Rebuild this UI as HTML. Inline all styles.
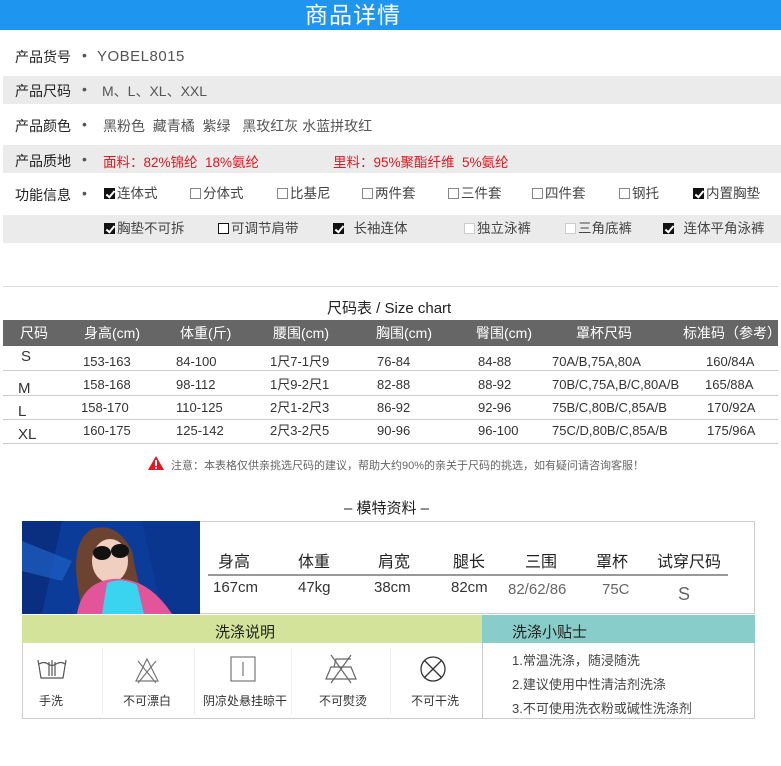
<!DOCTYPE html>
<html><head><meta charset="utf-8"><style>
*{margin:0;padding:0;box-sizing:border-box}
body{width:781px;height:766px;background:#fff;position:relative;overflow:hidden;font-family:"Liberation Sans","Noto Sans CJK SC",sans-serif;color:#333}
.a{position:absolute;white-space:nowrap}
.band{position:absolute;left:3px;right:0;background:#ebebeb}
.lbl{font-size:14px;color:#222;left:15px}
.dot{font-size:14px;color:#555;left:82px}
.v{font-size:14px;color:#555}
.cb{display:inline-block;width:11px;height:11px;border:1px solid #888;vertical-align:-1px;margin-right:2px;background:#fff;position:relative}
.ck{background:#111;border-color:#111}
.ck:after{content:"";position:absolute;left:3px;top:0px;width:3px;height:7px;border:solid #fff;border-width:0 2px 2px 0;transform:rotate(40deg)}
.opt{font-size:13.5px;color:#444;line-height:16px}
.th{font-size:14px;color:#fff;line-height:16px}
.td{font-size:13px;color:#333;line-height:15px}
.hl{position:absolute;left:3px;right:3px;height:1px;background:#ccc}
.mh{font-size:16px;color:#222}
.mv{font-size:15px;color:#333}
.wl{font-size:12px;color:#333}
.tip{font-size:13px;color:#444}
</style></head><body>
<div class="a" style="left:0;top:0;width:781px;height:30px;background:#1e96f0"></div>
<div class="a" style="left:305px;top:0px;font-size:23px;line-height:30px;color:#fff;letter-spacing:1px">商品详情</div>

<div class="band" style="top:76px;height:28px"></div>
<div class="band" style="top:145px;height:28px"></div>
<div class="band" style="top:215px;height:28px"></div>

<div class="a lbl" style="top:47px">产品货号</div><div class="a dot" style="top:47px">•</div>
<div class="a v" style="left:97px;top:48px;font-size:15px;letter-spacing:.5px">YOBEL8015</div>
<div class="a lbl" style="top:81px">产品尺码</div><div class="a dot" style="top:81px">•</div>
<div class="a v" style="left:102px;top:81px">M、L、XL、XXL</div>
<div class="a lbl" style="top:116px">产品颜色</div><div class="a dot" style="top:116px">•</div>
<div class="a v" style="left:103px;top:116px">黑粉色&nbsp; 藏青橘&nbsp; 紫绿&nbsp;&nbsp; 黑玫红灰 水蓝拼玫红</div>
<div class="a lbl" style="top:151px">产品质地</div><div class="a dot" style="top:151px">•</div>
<div class="a v" style="left:103px;top:151px;color:#e8141e;font-size:13.5px">面料：82%锦纶&nbsp; 18%氨纶</div>
<div class="a v" style="left:333px;top:151px;color:#e8141e;font-size:13.5px">里料：95%聚酯纤维&nbsp; 5%氨纶</div>
<div class="a lbl" style="top:185px">功能信息</div><div class="a dot" style="top:185px">•</div>

<div class="a opt" style="left:104px;top:186px"><span class="cb ck"></span>连体式</div>
<div class="a opt" style="left:190px;top:186px"><span class="cb"></span>分体式</div>
<div class="a opt" style="left:277px;top:186px"><span class="cb"></span>比基尼</div>
<div class="a opt" style="left:362px;top:186px"><span class="cb"></span>两件套</div>
<div class="a opt" style="left:448px;top:186px"><span class="cb"></span>三件套</div>
<div class="a opt" style="left:532px;top:186px"><span class="cb"></span>四件套</div>
<div class="a opt" style="left:619px;top:186px"><span class="cb"></span>钢托</div>
<div class="a opt" style="left:693px;top:186px"><span class="cb ck"></span>内置胸垫</div>

<div class="a opt" style="left:104px;top:221px"><span class="cb ck"></span>胸垫不可拆</div>
<div class="a opt" style="left:218px;top:221px"><span class="cb" style="border-color:#111"></span>可调节肩带</div>
<div class="a opt" style="left:333px;top:221px"><span class="cb ck"></span>&nbsp; 长袖连体</div>
<div class="a opt" style="left:464px;top:221px"><span class="cb" style="border-color:#ccc"></span>独立泳裤</div>
<div class="a opt" style="left:565px;top:221px"><span class="cb" style="border-color:#ccc"></span>三角底裤</div>
<div class="a opt" style="left:663px;top:221px"><span class="cb ck"></span>&nbsp; 连体平角泳裤</div>

<div class="a" style="left:3px;right:3px;top:286px;height:1px;background:#ddd"></div>
<div class="a" style="left:327px;top:297px;font-size:15px;color:#222">尺码表 / Size chart</div>

<div class="a" style="left:3px;width:775px;top:320px;height:26px;background:#666"></div>
<div class="a th" style="left:20px;top:325px">尺码</div>
<div class="a th" style="left:84px;top:325px">身高(cm)</div>
<div class="a th" style="left:180px;top:325px">体重(斤)</div>
<div class="a th" style="left:273px;top:325px">腰围(cm)</div>
<div class="a th" style="left:376px;top:325px">胸围(cm)</div>
<div class="a th" style="left:476px;top:325px">臀围(cm)</div>
<div class="a th" style="left:576px;top:325px">罩杯尺码</div>
<div class="a th" style="left:683px;top:325px">标准码（参考）</div>

<div class="hl" style="top:370px"></div><div class="hl" style="top:395px"></div><div class="hl" style="top:419px"></div><div class="hl" style="top:443px"></div>

<div class="a td" style="left:21px;top:349px;font-size:15px">S</div>
<div class="a td" style="left:18px;top:381px;font-size:15px">M</div>
<div class="a td" style="left:18px;top:404px;font-size:15px">L</div>
<div class="a td" style="left:18px;top:427px;font-size:15px">XL</div>

<div class="a td" style="left:83px;top:354px">153-163</div><div class="a td" style="left:176px;top:354px">84-100</div><div class="a td" style="left:270px;top:354px">1尺7-1尺9</div><div class="a td" style="left:377px;top:354px">76-84</div><div class="a td" style="left:478px;top:354px">84-88</div><div class="a td" style="left:552px;top:354px">70A/B,75A,80A</div><div class="a td" style="left:706px;top:354px">160/84A</div>
<div class="a td" style="left:83px;top:377px">158-168</div><div class="a td" style="left:176px;top:377px">98-112</div><div class="a td" style="left:270px;top:377px">1尺9-2尺1</div><div class="a td" style="left:377px;top:377px">82-88</div><div class="a td" style="left:478px;top:377px">88-92</div><div class="a td" style="left:552px;top:377px">70B/C,75A,B/C,80A/B</div><div class="a td" style="left:705px;top:377px">165/88A</div>
<div class="a td" style="left:81px;top:400px">158-170</div><div class="a td" style="left:176px;top:400px">110-125</div><div class="a td" style="left:270px;top:400px">2尺1-2尺3</div><div class="a td" style="left:377px;top:400px">86-92</div><div class="a td" style="left:478px;top:400px">92-96</div><div class="a td" style="left:552px;top:400px">75B/C,80B/C,85A/B</div><div class="a td" style="left:707px;top:400px">170/92A</div>
<div class="a td" style="left:83px;top:423px">160-175</div><div class="a td" style="left:176px;top:423px">125-142</div><div class="a td" style="left:270px;top:423px">2尺3-2尺5</div><div class="a td" style="left:377px;top:423px">90-96</div><div class="a td" style="left:478px;top:423px">96-100</div><div class="a td" style="left:552px;top:423px">75C/D,80B/C,85A/B</div><div class="a td" style="left:707px;top:423px">175/96A</div>

<svg class="a" style="left:147px;top:455px" width="18" height="16"><polygon points="9,1 17,15 1,15" fill="#e8141e"/><rect x="8" y="5" width="2" height="6" fill="#fff"/><rect x="8" y="12" width="2" height="2" fill="#fff"/></svg>
<div class="a" style="left:171px;top:457px;font-size:11px;color:#666">注意：本表格仅供亲挑选尺码的建议，帮助大约90%的亲关于尺码的挑选，如有疑问请咨询客服！</div>

<div class="a" style="left:344px;top:497px;font-size:15px;color:#222">– 模特资料 –</div>

<svg class="a" style="left:22px;top:521px" width="178" height="93">
<rect width="178" height="93" fill="#0c3c9a"/>
<polygon points="0,0 40,0 20,93 0,93" fill="#0a2f80"/>
<polygon points="0,20 50,40 40,60 0,50" fill="#1f5fc4" opacity=".7"/>
<polygon points="120,0 178,0 178,93 140,93" fill="#0a3690"/>
<path d="M55,60 Q50,20 70,8 Q95,0 110,30 Q115,60 125,90 L60,93 Z" fill="#6b4330"/>
<ellipse cx="88" cy="40" rx="18" ry="22" fill="#f0cfc0"/>
<ellipse cx="80" cy="32" rx="9" ry="7" fill="#111"/><ellipse cx="98" cy="30" rx="9" ry="7" fill="#111"/>
<path d="M55,93 Q60,62 90,58 Q125,55 150,93 Z" fill="#e2559a"/>
<path d="M80,93 L85,62 Q100,56 115,64 L122,93 Z" fill="#3ad4f0"/>
</svg>

<div class="a" style="left:200px;top:521px;width:555px;height:93px;border:1px solid #ccc;border-left:none"></div>
<div class="a mh" style="left:218px;top:548px">身高</div>
<div class="a mh" style="left:298px;top:548px">体重</div>
<div class="a mh" style="left:378px;top:548px">肩宽</div>
<div class="a mh" style="left:453px;top:548px">腿长</div>
<div class="a mh" style="left:525px;top:548px">三围</div>
<div class="a mh" style="left:596px;top:548px">罩杯</div>
<div class="a mh" style="left:657px;top:548px">试穿尺码</div>
<div class="a" style="left:208px;top:574px;width:520px;height:2px;background:#999"></div>
<div class="a mv" style="left:213px;top:579px">167cm</div>
<div class="a mv" style="left:298px;top:579px">47kg</div>
<div class="a mv" style="left:374px;top:579px">38cm</div>
<div class="a mv" style="left:451px;top:579px">82cm</div>
<div class="a mv" style="left:508px;top:581px;color:#666">82/62/86</div>
<div class="a mv" style="left:602px;top:581px;color:#666">75C</div>
<div class="a mv" style="left:678px;top:584px;color:#666;font-size:18px">S</div>

<div class="a" style="left:22px;top:615px;width:460px;height:28px;background:#d4e39a"></div>
<div class="a" style="left:482px;top:615px;width:273px;height:28px;background:#88cdc9"></div>
<div class="a" style="left:215px;top:621px;font-size:15px;color:#222">洗涤说明</div>
<div class="a" style="left:512px;top:621px;font-size:15px;color:#222">洗涤小贴士</div>
<div class="a" style="left:22px;top:643px;width:733px;height:76px;border:1px solid #ccc;border-top:none"></div>
<div class="a" style="left:482px;top:643px;width:1px;height:76px;background:#ccc"></div>
<div class="a" style="left:102px;top:648px;width:1px;height:66px;background:#eee"></div>
<div class="a" style="left:194px;top:648px;width:1px;height:66px;background:#eee"></div>
<div class="a" style="left:291px;top:648px;width:1px;height:66px;background:#eee"></div>
<div class="a" style="left:390px;top:648px;width:1px;height:66px;background:#eee"></div>

<svg class="a" style="left:36px;top:656px" width="32" height="28" fill="none" stroke="#555" stroke-width="1.2"><path d="M2,4 L5,22 L27,22 L30,4"/><path d="M3,8 Q8,5 12,8 Q16,11 20,8 Q25,5 29,8"/><path d="M13,20 L13,6 M16,20 L16,4 M19,20 L19,6"/></svg>
<svg class="a" style="left:133px;top:656px" width="28" height="28" fill="none" stroke="#777" stroke-width="1.2"><path d="M14,3 L25,25 L3,25 Z"/><path d="M5,5 L23,27 M23,5 L5,27"/></svg>
<svg class="a" style="left:228px;top:654px" width="30" height="30" fill="none" stroke="#777" stroke-width="1.2"><rect x="3" y="3" width="24" height="24"/><path d="M15,8 L15,22"/></svg>
<svg class="a" style="left:323px;top:653px" width="36" height="32" fill="none" stroke="#666" stroke-width="1.2"><path d="M3,26 L8,14 L28,14 L33,26 Z"/><path d="M11,14 L13,6 L28,6"/><path d="M8,2 L28,30 M28,2 L8,30"/></svg>
<svg class="a" style="left:418px;top:654px" width="30" height="30" fill="none" stroke="#333" stroke-width="1.3"><circle cx="15" cy="15" r="12"/><path d="M6,6 L24,24 M24,6 L6,24"/></svg>

<div class="a wl" style="left:39px;top:692px">手洗</div>
<div class="a wl" style="left:123px;top:692px">不可漂白</div>
<div class="a wl" style="left:203px;top:692px">阴凉处悬挂晾干</div>
<div class="a wl" style="left:319px;top:692px">不可熨烫</div>
<div class="a wl" style="left:411px;top:692px">不可干洗</div>

<div class="a tip" style="left:512px;top:650px">1.常温洗涤，随浸随洗</div>
<div class="a tip" style="left:512px;top:674px">2.建议使用中性清洁剂洗涤</div>
<div class="a tip" style="left:512px;top:698px">3.不可使用洗衣粉或碱性洗涤剂</div>
</body></html>
